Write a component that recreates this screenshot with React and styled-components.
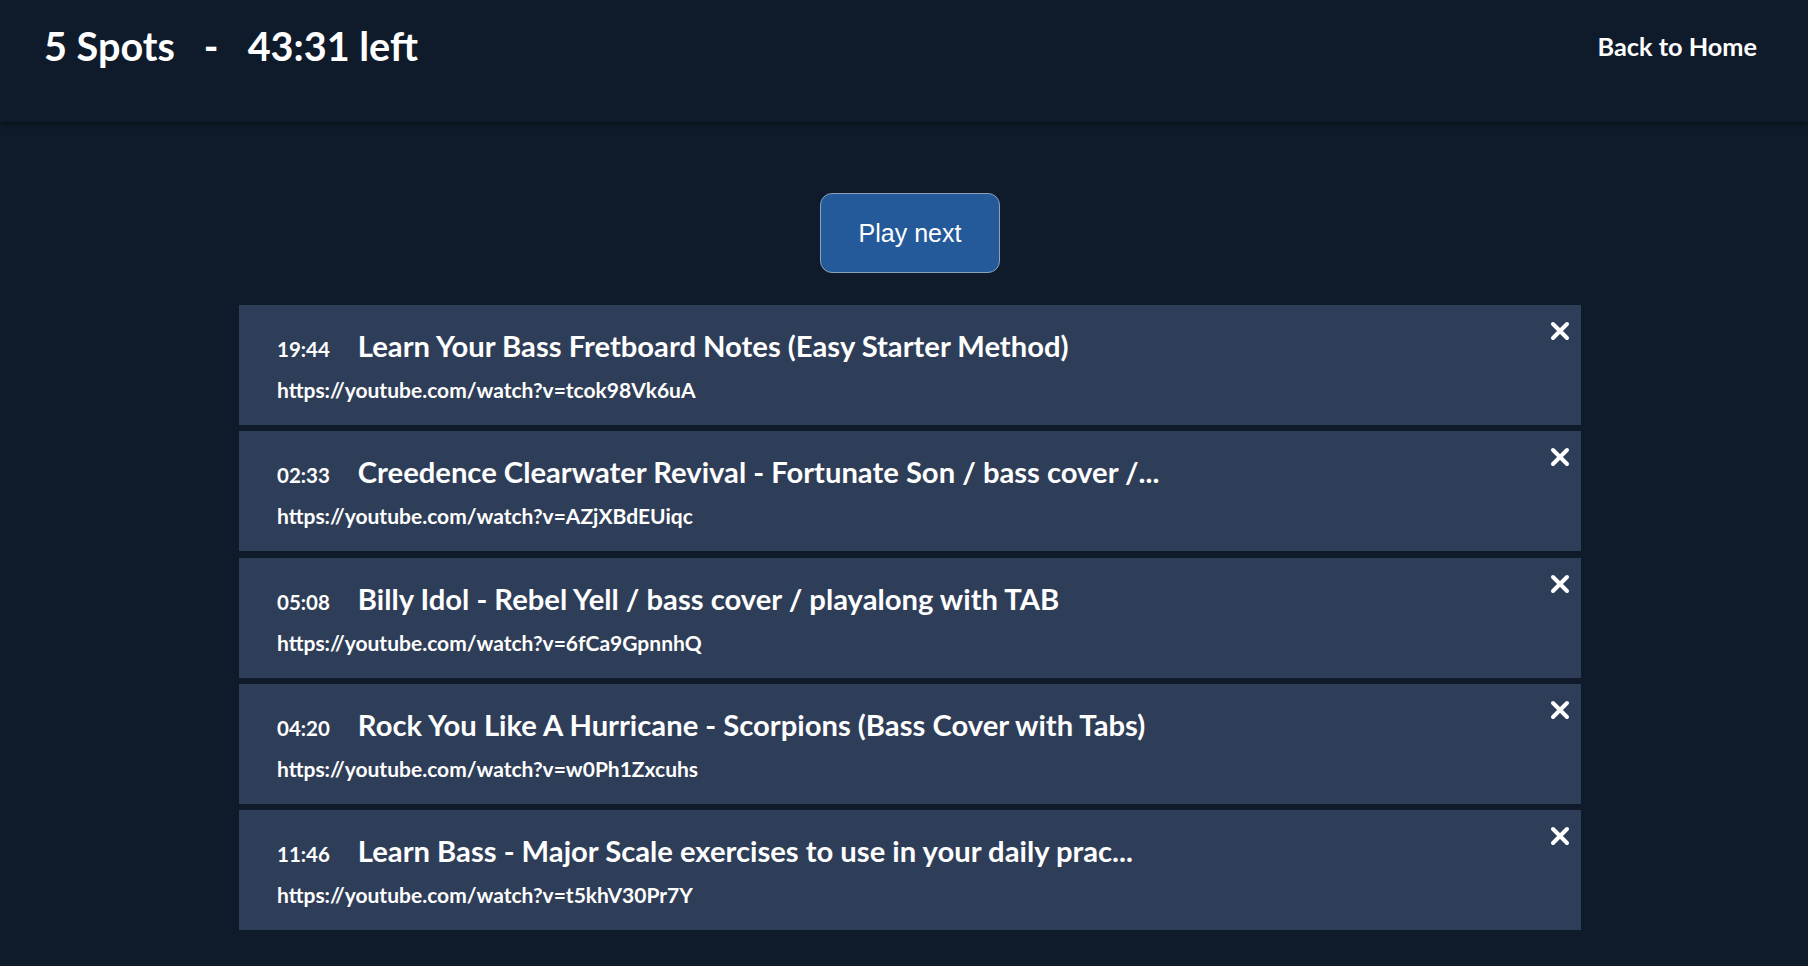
import React from "react";
import styled, { createGlobalStyle } from "styled-components";

const GlobalStyle = createGlobalStyle`
  html, body {
    margin: 0;
    padding: 0;
    background: #0f1b2b;
  }

  body {
    min-height: 966px;
    font-family: "Lato", "Open Sans", sans-serif;
    color: #ffffff;
  }
`;

const videos = [
  {
    time: "19:44",
    title: "Learn Your Bass Fretboard Notes (Easy Starter Method)",
    url: "https://youtube.com/watch?v=tcok98Vk6uA",
  },
  {
    time: "02:33",
    title: "Creedence Clearwater Revival - Fortunate Son / bass cover /...",
    url: "https://youtube.com/watch?v=AZjXBdEUiqc",
  },
  {
    time: "05:08",
    title: "Billy Idol - Rebel Yell / bass cover / playalong with TAB",
    url: "https://youtube.com/watch?v=6fCa9GpnnhQ",
  },
  {
    time: "04:20",
    title: "Rock You Like A Hurricane - Scorpions (Bass Cover with Tabs)",
    url: "https://youtube.com/watch?v=w0Ph1Zxcuhs",
  },
  {
    time: "11:46",
    title: "Learn Bass - Major Scale exercises to use in your daily prac...",
    url: "https://youtube.com/watch?v=t5khV30Pr7Y",
  },
];

function CloseIcon() {
  return (
    <svg width="20" height="20" viewBox="0 0 20 20" fill="none">
      <path
        d="M3 3 L17 17 M17 3 L3 17"
        stroke="#ffffff"
        strokeWidth="4"
        strokeLinecap="round"
      />
    </svg>
  );
}

export default function App() {
  return (
    <>
      <GlobalStyle />
      <Header>
        <SessionInfo>
          <span>5 Spots</span>
          <span>-</span>
          <span>43:31 left</span>
        </SessionInfo>
        <HomeLink href="#">Back to Home</HomeLink>
      </Header>

      <Main>
        <PlayButton>Play next</PlayButton>
        <Queue>
          {videos.map((video) => (
            <Card key={video.url}>
              <Details>
                <MetaRow>
                  <Duration>{video.time}</Duration>
                  <VideoTitle>{video.title}</VideoTitle>
                </MetaRow>
                <VideoUrl>{video.url}</VideoUrl>
              </Details>
              <RemoveButton aria-label="Remove">
                <CloseIcon />
              </RemoveButton>
            </Card>
          ))}
        </Queue>
      </Main>
    </>
  );
}

const Header = styled.header`
  position: relative;
  z-index: 1;
  box-sizing: border-box;
  height: 122px;
  padding: 0 51px 30px 44px;
  display: flex;
  justify-content: space-between;
  align-items: center;
  background: #0f1b2b;
  box-shadow: 0 2px 5px rgba(0, 0, 0, 0.5);
`;

const SessionInfo = styled.h1`
  margin: 0;
  display: flex;
  align-items: baseline;
  gap: 29px;
  font-size: 39.6px;
  font-weight: 700;
  line-height: 1;
`;

const HomeLink = styled.a`
  color: #ffffff;
  text-decoration: none;
  font-size: 25.3px;
  font-weight: 700;
`;

const Main = styled.main`
  padding: 71px 0 36px 12px;
  display: flex;
  flex-direction: column;
  align-items: center;
`;

const PlayButton = styled.button`
  width: 180px;
  height: 80px;
  box-sizing: border-box;
  border: 1px solid #8aa3b8;
  border-radius: 12px;
  background: #245a9a;
  color: #ffffff;
  font-family: "Liberation Sans", Arial, sans-serif;
  font-size: 25px;
  cursor: pointer;
`;

const Queue = styled.ul`
  list-style: none;
  margin: 32px 0 0;
  padding: 0;
  width: 1342px;
  display: flex;
  flex-direction: column;
  gap: 6.25px;
`;

const Card = styled.li`
  box-sizing: border-box;
  height: 120px;
  padding: 21px 11px 20px 38px;
  display: flex;
  justify-content: space-between;
  align-items: flex-start;
  background: #2f3e58;
`;

const Details = styled.div`
  display: flex;
  flex-direction: column;
`;

const MetaRow = styled.div`
  display: flex;
  align-items: baseline;
  gap: 28px;
  line-height: 40px;
`;

const Duration = styled.span`
  font-size: 20.5px;
  font-weight: 700;
`;

const VideoTitle = styled.span`
  font-size: 29.2px;
  font-weight: 700;
`;

const VideoUrl = styled.span`
  margin-top: 6px;
  font-size: 21px;
  font-weight: 700;
  line-height: 30px;
`;

const RemoveButton = styled.button`
  margin-top: -5px;
  padding: 0;
  width: 20px;
  height: 20px;
  border: none;
  background: none;
  cursor: pointer;
  display: flex;
`;
